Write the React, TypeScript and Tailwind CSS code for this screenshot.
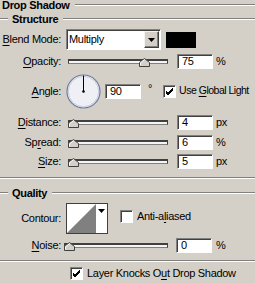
import React from 'react';

function Etched({ className = '' }: { className?: string }) {
  return <div className={`h-[2px] border-t border-t-[#808080] border-b border-b-white ${className}`} />;
}

function U({ children }: { children: React.ReactNode }) {
  return <span className="underline underline-offset-[2px]">{children}</span>;
}

function Label({ children }: { children: React.ReactNode }) {
  return <div className="w-[61px] shrink-0 text-right whitespace-nowrap">{children}</div>;
}

function Field({ value, className = '' }: { value: string; className?: string }) {
  return (
    <div className={`w-[36px] h-[15px] shrink-0 bg-white border border-t-[#808080] border-l-[#808080] border-b-white border-r-white shadow-[inset_1px_1px_0_#404040] pl-[4px] leading-[13px] ${className}`}>
      {value}
    </div>
  );
}

function Thumb({ at }: { at: number }) {
  return (
    <svg className="absolute top-[-3px]" style={{ left: at - 5 }} width="11" height="9" viewBox="0 0 11 9">
      <polygon points="0.5,8.5 0.5,4.5 5.5,0.5 10.5,4.5 10.5,8.5" fill="#d4d0c8" stroke="#404040" />
      <polyline points="1.5,7.5 1.5,4.8 5.5,1.6" fill="none" stroke="#ffffff" />
    </svg>
  );
}

function Slider({ at, className = 'w-[100px] ml-[7px]' }: { at: number; className?: string }) {
  return (
    <div className={`relative h-[5px] shrink-0 bg-[#f4f4f4] border-t-2 border-t-[#404040] border-l border-l-[#404040] border-r border-r-[#404040] border-b border-b-[#808080] ${className}`}>
      <Thumb at={at} />
    </div>
  );
}

function Check({ checked, className = '' }: { checked: boolean; className?: string }) {
  return (
    <div className={`w-[13px] h-[13px] shrink-0 bg-white border border-t-[#808080] border-l-[#808080] border-b-white border-r-white shadow-[inset_1px_1px_0_#404040] flex items-center justify-center ${className}`}>
      {checked && (
        <svg width="9" height="9" viewBox="0 0 9 9">
          <path d="M1 4 L3 6 L8 1 M1 5 L3 7 L8 2 M1 6 L3 8 L8 3" fill="none" stroke="#000" strokeWidth="1" />
        </svg>
      )}
    </div>
  );
}

function SliderRow({ label, value, unit, at }: { label: React.ReactNode; value: string; unit: string; at: number }) {
  return (
    <div className="flex items-center h-[15px]">
      <Label>{label}</Label>
      <Slider at={at} />
      <Field value={value} className="ml-[9px]" />
      <span className="ml-[3px]">{unit}</span>
    </div>
  );
}

export default function App() {
  return (
    <div className="w-[255px] h-[283px] bg-[#d4d0c8] text-[11px] tracking-[-0.3px] text-black overflow-hidden flex flex-col font-['Liberation_Sans',Arial,sans-serif] select-none">
      {/* Drop Shadow */}
      <div className="flex items-center h-[10px]">
        <span className="ml-[2px] font-bold whitespace-nowrap">Drop Shadow</span>
        <Etched className="flex-1 ml-[5px]" />
      </div>

      {/* Structure */}
      <div className="flex items-center h-[10px] mt-[4px]">
        <Etched className="w-[8px]" />
        <span className="ml-[4px] font-bold">Structure</span>
        <Etched className="flex-1 ml-[5px]" />
      </div>

      <div className="flex items-center h-[21px] mt-[5px]">
        <Label><U>B</U>lend Mode:</Label>
        <div className="ml-[5px] w-[95px] h-[21px] bg-white border border-t-[#808080] border-l-[#808080] border-b-white border-r-white shadow-[inset_1px_1px_0_#404040] flex items-center">
          <span className="ml-[2px] flex-1">Multiply</span>
          <div className="w-[15px] h-[17px] mr-[1px] bg-[#d4d0c8] border border-t-[#f4f4f4] border-l-[#f4f4f4] border-b-[#404040] border-r-[#404040] shadow-[inset_-1px_-1px_0_#808080] flex items-center justify-center">
            <svg width="7" height="4" viewBox="0 0 7 4"><polygon points="0,0 7,0 3.5,4" fill="#000" /></svg>
          </div>
        </div>
        <div className="ml-[5px] w-[30px] h-[16px] bg-black" />
      </div>

      <div className="mt-[4px]">
        <SliderRow label={<><U>O</U>pacity:</>} value="75" unit="%" at={75} />
      </div>

      {/* Angle */}
      <div className="flex items-center h-[34px] mt-[5px]">
        <Label><U>A</U>ngle:</Label>
        <svg className="ml-[5px] shrink-0" width="35" height="35" viewBox="0 0 35 35">
          <circle cx="17.5" cy="17.5" r="16.5" fill="#eef0f6" stroke="#6f7b9c" strokeWidth="1.2" />
          <circle cx="17.5" cy="17.5" r="15.2" fill="none" stroke="#c8cde0" strokeWidth="1" />
          <line x1="17.5" y1="1.5" x2="17.5" y2="17.5" stroke="#000" strokeWidth="1" />
          <circle cx="17.5" cy="17.5" r="1.3" fill="#000" />
        </svg>
        <Field value="90" className="ml-[4px] w-[35px]" />
        <span className="ml-[7px] -mt-[6px]">°</span>
        <Check checked className="ml-[11px]" />
        <span className="ml-[3px] whitespace-nowrap text-[10.5px] tracking-[-0.5px]">Use <U>G</U>lobal Light</span>
      </div>

      <div className="mt-[7px]">
        <SliderRow label={<><U>D</U>istance:</>} value="4" unit="px" at={4} />
      </div>
      <div className="mt-[5px]">
        <SliderRow label={<>Sp<U>r</U>ead:</>} value="6" unit="%" at={4} />
      </div>
      <div className="mt-[4px]">
        <SliderRow label={<><U>S</U>ize:</>} value="5" unit="px" at={4} />
      </div>

      <Etched className="mt-[8px]" />

      {/* Quality */}
      <div className="flex items-center h-[10px] mt-[9px]">
        <Etched className="w-[8px]" />
        <span className="ml-[4px] font-bold">Quality</span>
        <Etched className="flex-1 ml-[5px]" />
      </div>

      <div className="flex items-center h-[31px] mt-[5px]">
        <Label>Contour:</Label>
        <div className="ml-[5px] w-[42px] h-[31px] border border-[#404040] bg-white flex">
          <svg width="29" height="29" viewBox="0 0 29 29">
            <polygon points="0,29 29,0 29,29" fill="#808080" />
          </svg>
          <div className="flex-1 bg-white flex justify-center pt-[5px]">
            <svg width="7" height="4" viewBox="0 0 7 4"><polygon points="0,0 7,0 3.5,4" fill="#000" /></svg>
          </div>
        </div>
        <div className="ml-[12px] -mt-[4px] flex items-center">
          <Check checked={false} />
          <span className="ml-[4px] whitespace-nowrap">Anti-a<U>l</U>iased</span>
        </div>
      </div>

      <div className="flex items-center h-[15px] mt-[4px]">
        <Label><U>N</U>oise:</Label>
        <Slider at={4} className="w-[104px] ml-[3px]" />
        <Field value="0" className="ml-[8px]" />
        <span className="ml-[4px]">%</span>
      </div>

      <Etched className="mt-[7px]" />

      <div className="flex items-center h-[13px] mt-[5px] ml-[70px]">
        <Check checked />
        <span className="ml-[4px] whitespace-nowrap">Layer Knocks O<U>u</U>t Drop Shadow</span>
      </div>
    </div>
  );
}
